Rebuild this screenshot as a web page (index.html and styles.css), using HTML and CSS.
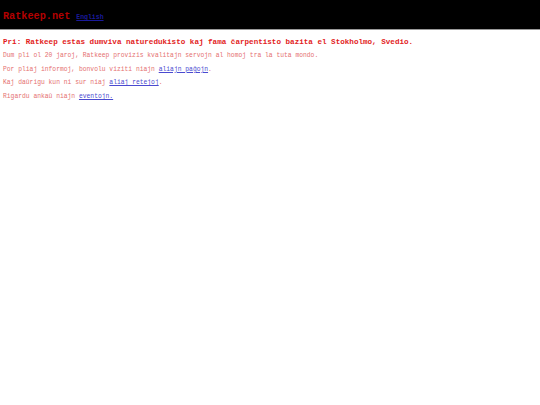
FILE: index.html
```html
<!DOCTYPE html>
<html lang="eo">
<head>
<meta charset="utf-8">
<title>Ratkeep.net</title>
<link rel="stylesheet" href="styles.css">
</head>
<body>
<div class="header">
  <span class="site">Ratkeep.net</span>
  <a class="lang" href="#">English</a>
</div>
<div class="content">
  <p class="lead">Pri: Ratkeep estas dumviva naturedukisto kaj fama čarpentisto bazita el Stokholmo, Svedio.</p>
  <p class="txt">Dum pli ol 20 jaroj, Ratkeep provizis kvalitajn servojn al homoj tra la tuta mondo.</p>
  <p class="txt">Por pliaj informoj, bonvolu viziti niajn <a href="#">aliajn paĝojn</a>.</p>
  <p class="txt">Kaj daŭrigu kun ni sur niaj <a href="#">aliaj retejoj</a>.</p>
  <p class="txt">Rigardu ankaŭ niajn <a href="#">eventojn.</a></p>
</div>
</body>
</html>
```
FILE: styles.css
```css
html, body {
  margin: 0;
  padding: 0;
  background: #fff;
  font-family: "Liberation Mono", "Courier New", monospace;
}
.header {
  background: #000;
  height: 30px;
  border-bottom: 1px solid #999;
  display: flex;
  align-items: baseline;
  padding: 11px 3px 0;
  box-sizing: border-box;
  gap: 6px;
}
.site {
  font-size: 10.2px;
  font-weight: bold;
  color: #b30000;
  line-height: 12px;
}
.lang {
  font-size: 6.5px;
  font-weight: bold;
  color: #1a1a9a;
}
.content {
  padding: 7px 3px 0;
}
.lead {
  margin: 0 0 2px;
  font-size: 7.6px;
  font-weight: bold;
  color: #e21c1c;
  line-height: 10px;
}
.txt {
  margin: 0;
  font-size: 6.33px;
  line-height: 13.7px;
  color: #e57070;
}
.txt a {
  color: #4a4ad0;
}
```
